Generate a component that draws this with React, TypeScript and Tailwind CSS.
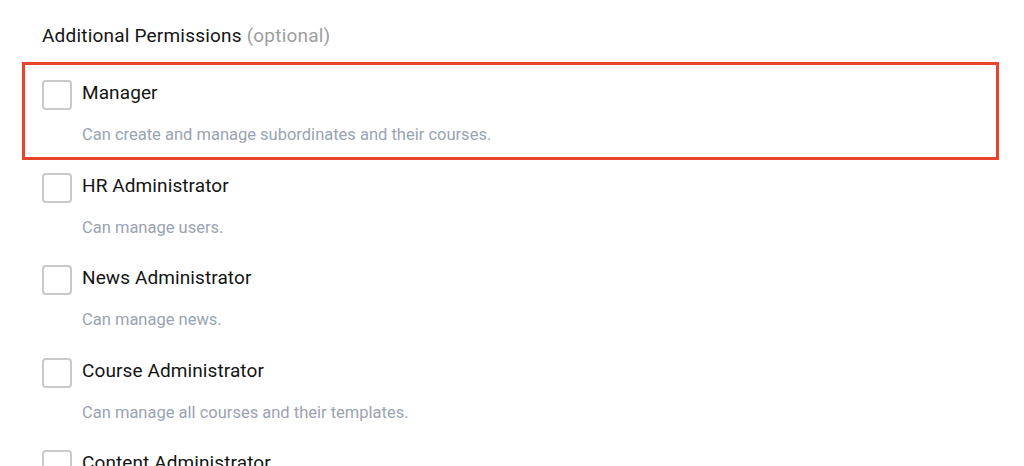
const permissions = [
  { title: "Manager", description: "Can create and manage subordinates and their courses.", highlighted: true },
  { title: "HR Administrator", description: "Can manage users." },
  { title: "News Administrator", description: "Can manage news." },
  { title: "Course Administrator", description: "Can manage all courses and their templates." },
  { title: "Content Administrator", description: "Can manage content." },
];

function PermissionRow({
  title,
  description,
  highlighted,
}: {
  title: string;
  description: string;
  highlighted?: boolean;
}) {
  return (
    <label className="relative flex gap-[10px] pb-[25.5px] cursor-pointer">
      {highlighted && (
        <div className="pointer-events-none absolute -top-[18px] -left-[20px] -right-[17px] bottom-[12.5px] border-[3px] border-[#e9432e]" />
      )}
      <input type="checkbox" className="peer sr-only" />
      <span className="h-[30px] w-[30px] shrink-0 rounded-[4px] border-2 border-[#c9c9c9] bg-white" />
      <div className="flex flex-col">
        <span className="text-[19px] leading-[26px] tracking-[0.1px] text-[#141414]">{title}</span>
        <span className="mt-[17px] text-[16.5px] leading-[24px] text-[#9aa3b1]">{description}</span>
      </div>
    </label>
  );
}

export default function App() {
  return (
    <div
      className="h-[466px] overflow-hidden bg-white px-[42px] pt-[22px]"
      style={{ fontFamily: "Roboto, 'Liberation Sans', sans-serif" }}
    >
      <h2 className="text-[19px] leading-[28px] tracking-[0.2px] text-[#141414]">
        Additional Permissions <span className="text-[#9e9e9e]">(optional)</span>
      </h2>
      <div className="mt-[30px] flex flex-col">
        {permissions.map((p) => (
          <PermissionRow key={p.title} {...p} />
        ))}
      </div>
    </div>
  );
}
